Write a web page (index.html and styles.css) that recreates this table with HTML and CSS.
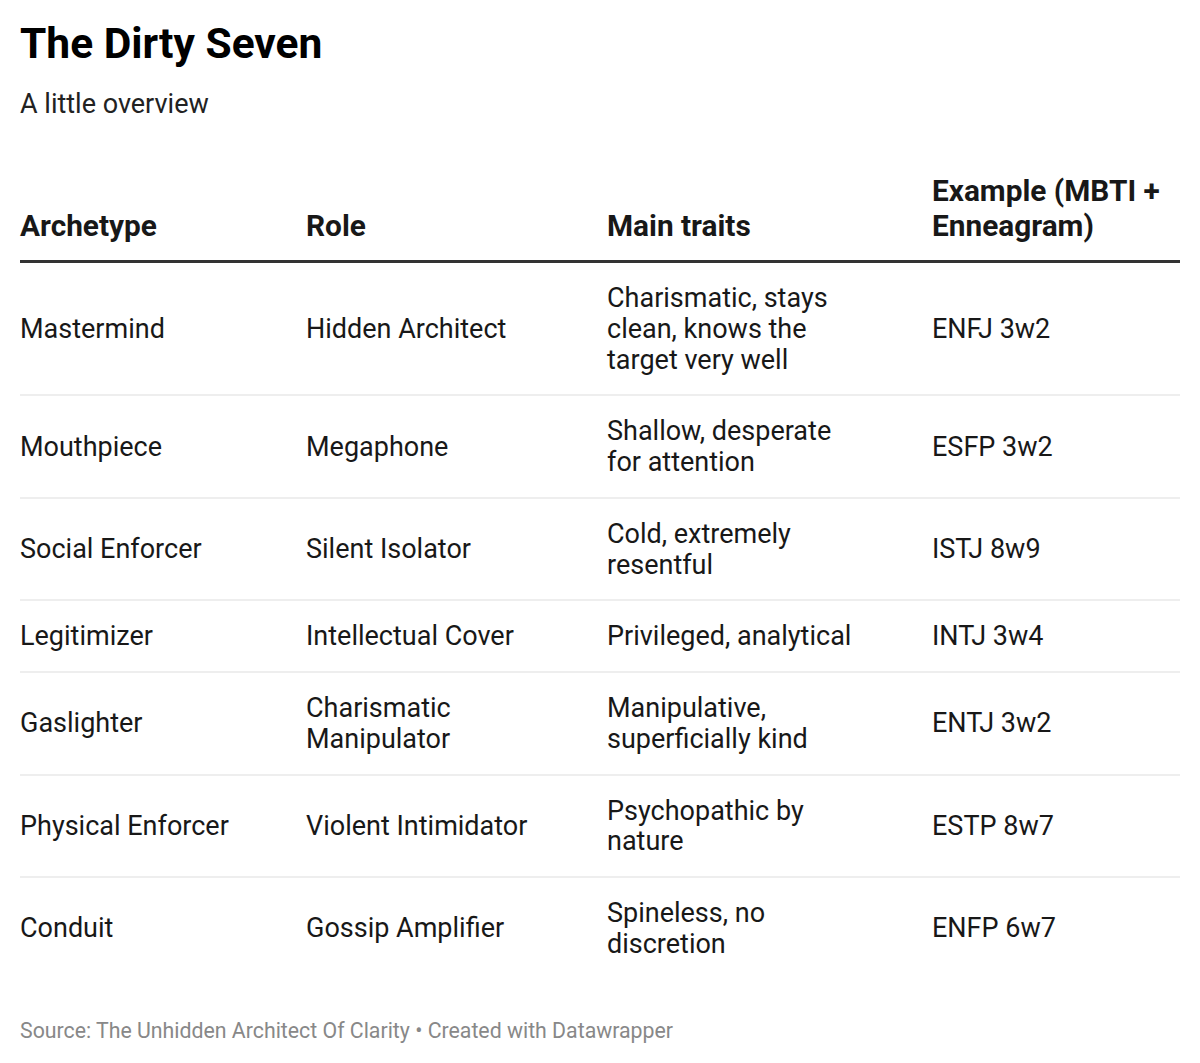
FILE: index.html
```html
<!DOCTYPE html>
<html>
<head>
<meta charset="utf-8">
<link rel="stylesheet" href="styles.css">
</head>
<body>
<div class="chart">
  <h1 class="title">The Dirty Seven</h1>
  <p class="subtitle">A little overview</p>
  <table class="tbl">
    <colgroup>
      <col class="c1"><col class="c2"><col class="c3"><col class="c4">
    </colgroup>
    <thead>
      <tr>
        <th class="p1">Archetype</th>
        <th class="p2">Role</th>
        <th class="p3">Main traits</th>
        <th class="p4">Example (MBTI + Enneagram)</th>
      </tr>
    </thead>
    <tbody>
      <tr><td class="p1">Mastermind</td><td class="p2">Hidden Architect</td><td class="p3">Charismatic, stays clean, knows the target very well</td><td class="p4">ENFJ 3w2</td></tr>
      <tr><td class="p1">Mouthpiece</td><td class="p2">Megaphone</td><td class="p3">Shallow, desperate for attention</td><td class="p4">ESFP 3w2</td></tr>
      <tr><td class="p1">Social Enforcer</td><td class="p2">Silent Isolator</td><td class="p3">Cold, extremely resentful</td><td class="p4">ISTJ 8w9</td></tr>
      <tr><td class="p1">Legitimizer</td><td class="p2">Intellectual Cover</td><td class="p3">Privileged, analytical</td><td class="p4">INTJ 3w4</td></tr>
      <tr><td class="p1">Gaslighter</td><td class="p2">Charismatic Manipulator</td><td class="p3">Manipulative, superficially kind</td><td class="p4">ENTJ 3w2</td></tr>
      <tr><td class="p1">Physical Enforcer</td><td class="p2">Violent Intimidator</td><td class="p3">Psychopathic by nature</td><td class="p4">ESTP 8w7</td></tr>
      <tr class="last"><td class="p1">Conduit</td><td class="p2">Gossip Amplifier</td><td class="p3">Spineless, no discretion</td><td class="p4">ENFP 6w7</td></tr>
    </tbody>
  </table>
  <p class="footer">Source: The Unhidden Architect Of Clarity • Created with Datawrapper</p>
</div>
</body>
</html>
```
FILE: styles.css
```css
html, body {
  margin: 0;
  padding: 0;
  background: #fff;
}
body {
  font-family: Roboto, "Liberation Sans", sans-serif;
  color: #181818;
}
.chart {
  padding: 20px 20px 0 20px;
}
.title {
  margin: 0;
  font-size: 42.5px;
  line-height: 48px;
  font-weight: 700;
  color: #000;
}
.subtitle {
  margin: 20px 0 0 0;
  font-size: 27px;
  line-height: 32px;
  color: #222;
}
.tbl {
  margin-top: 53px;
  width: 1160px;
  table-layout: fixed;
  border-collapse: collapse;
}
.c1 { width: 286px; }
.c2 { width: 301px; }
.c3 { width: 325px; }
.c4 { width: 248px; }
th, td {
  padding: 0;
  text-align: left;
}
th {
  font-size: 29.8px;
  line-height: 35px;
  font-weight: 700;
  vertical-align: bottom;
  padding-bottom: 17px;
  border-bottom: 3px solid #333;
  color: #181818;
}
td {
  font-size: 27px;
  line-height: 30.75px;
  vertical-align: middle;
  padding-top: 20px;
  padding-bottom: 19px;
  border-bottom: 2px solid #eeeeee;
  color: #181818;
}
tr.last td {
  border-bottom: none;
}
.p1 { padding-right: 20px; }
.p2 { padding-right: 30px; }
.p3 { padding-right: 70px; }
.p4 { padding-right: 0; }
.footer {
  margin: 40px 0 0 0;
  font-size: 21.3px;
  line-height: 24px;
  color: #888;
}
```
